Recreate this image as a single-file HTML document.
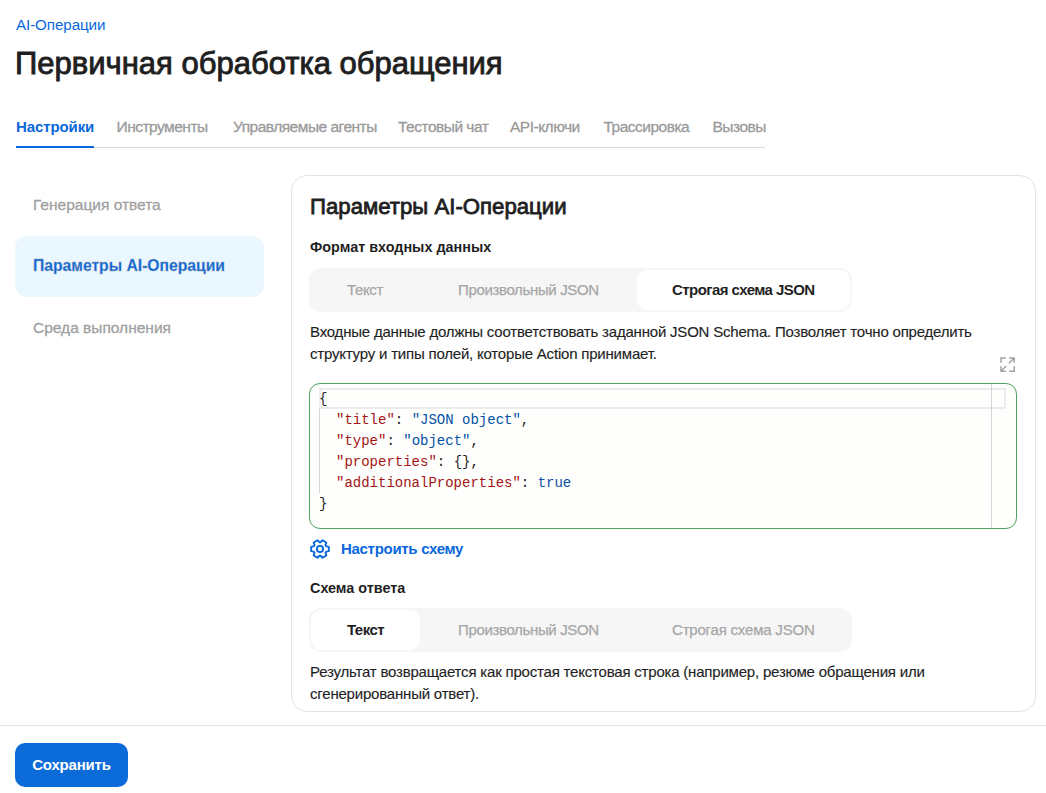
<!DOCTYPE html>
<html><head><meta charset="utf-8">
<style>
*{box-sizing:border-box;margin:0;padding:0}
html,body{width:1046px;height:793px;overflow:hidden;background:#fff}
body{font-family:"Liberation Sans",sans-serif;color:#1f1f1f;position:relative}
.abs{position:absolute;white-space:nowrap}
.crumb{left:16px;top:16px;font-size:15.2px;line-height:18px;color:#0a68dc;letter-spacing:-0.1px}
.title{left:15px;top:46px;font-size:31px;line-height:36px;color:#1f1f1f;-webkit-text-stroke:0.9px #1f1f1f}
.tab{top:117px;font-size:15.5px;line-height:20px;color:#9a9a9a;letter-spacing:-0.5px;-webkit-text-stroke:0.3px #9a9a9a}
.tab.act{color:#0a68dc;font-weight:700;font-size:15px;letter-spacing:-0.1px;-webkit-text-stroke:0}
.tabline{left:16px;top:147px;width:749px;height:1px;background:#d9d9d9}
.tabul{left:16px;top:146px;width:78px;height:2px;background:#0a68dc}
.side{left:33px;font-size:15.5px;line-height:20px;color:#a0a0a0;-webkit-text-stroke:0.3px #a0a0a0}
.sideact{left:15px;top:236px;width:249px;height:61px;border-radius:12px;background:#ebf7fe}
.card{left:291px;top:175px;width:745px;height:537px;border:1px solid #e3e3e3;border-radius:16px}
.h2{left:310px;top:193px;font-size:22.2px;line-height:28px;color:#1f1f1f;-webkit-text-stroke:0.8px #1f1f1f}
.lbl{left:310px;font-size:14.4px;line-height:18px;font-weight:700;color:#1f1f1f}
.seg{left:309px;width:543px;height:44px;border-radius:12px;background:#f6f6f6}
.segb{position:absolute;top:2px;height:40px;border-radius:10px;background:#fff}
.segt{position:absolute;top:12px;font-size:15px;line-height:20px;color:#a6a6a6;white-space:nowrap;letter-spacing:-0.35px;-webkit-text-stroke:0.25px #a6a6a6}
.segt.act{color:#1f1f1f;font-weight:700;letter-spacing:-0.55px;-webkit-text-stroke:0}
.desc{left:310px;font-size:15px;line-height:22px;color:#1f1f1f;letter-spacing:-0.2px;-webkit-text-stroke:0.15px #1f1f1f}
.editor{left:309px;top:383px;width:708px;height:146px;border:1px solid #4da35f;border-radius:11px;background:#fefefc;overflow:hidden}
.code{font-family:"Liberation Mono",monospace;font-size:14px;line-height:21px;color:#1f1f1f}
.k{color:#a31515}.s{color:#0451a5}.b{color:#0b4fa8}
.btn{left:15px;top:743px;width:113px;height:44px;border-radius:10px;background:#0b6cd9;color:#fff;font-size:15px;font-weight:700;line-height:44px;text-align:center;letter-spacing:-0.2px}
</style></head><body>
<div class="abs crumb">AI-Операции</div>
<div class="abs title">Первичная обработка обращения</div>

<div class="abs tab act" style="left:16px">Настройки</div>
<div class="abs tab" style="left:116.5px">Инструменты</div>
<div class="abs tab" style="left:233px">Управляемые агенты</div>
<div class="abs tab" style="left:398px">Тестовый чат</div>
<div class="abs tab" style="left:510px">API-ключи</div>
<div class="abs tab" style="left:603.5px">Трассировка</div>
<div class="abs tab" style="left:712.5px">Вызовы</div>
<div class="abs tabline"></div>
<div class="abs tabul"></div>

<div class="abs side" style="top:195px">Генерация ответа</div>
<div class="abs sideact"></div>
<div class="abs side" style="top:256px;color:#0a68dc;font-weight:700;font-size:15.7px">Параметры AI-Операции</div>
<div class="abs side" style="top:318px">Среда выполнения</div>

<div class="abs card"></div>
<div class="abs h2">Параметры AI-Операции</div>
<div class="abs lbl" style="top:238px">Формат входных данных</div>
<div class="abs seg" style="top:268px">
  <div class="segb" style="left:328px;width:213px"></div>
  <div class="segt" style="left:38px">Текст</div>
  <div class="segt" style="left:149px">Произвольный JSON</div>
  <div class="segt act" style="left:363px">Строгая схема JSON</div>
</div>
<div class="abs desc" style="top:321px">Входные данные должны соответствовать заданной JSON Schema. Позволяет точно определить</div>
<div class="abs desc" style="top:343px">структуру и типы полей, которые Action принимает.</div>

<div class="abs editor"></div>
<div class="abs" style="left:319px;top:388px;width:687px;height:21px;border:2px solid #ececec"></div>
<div class="abs" style="left:319px;top:409px;width:1px;height:84px;background:#d4d4d4"></div>
<div class="abs" style="left:991px;top:384px;width:1px;height:144px;background:#d6d6d6"></div>
<svg class="abs" style="left:1000px;top:357px" width="16" height="16" viewBox="0 0 16 16" fill="none" stroke="#a0a0a0" stroke-width="1.45"><path d="M1 5.8V1H5.8M9.2 1H14.2V5.8M14 1.2L8.9 6.3M1 9.2V14.2H5.8M1.2 14L6.2 9M9.2 14.2H14.2V9.2"/></svg>
<div class="abs code" style="left:319px;top:389px">{</div>
<div class="abs code" style="left:336px;top:410px"><span class="k">"title"</span>: <span class="s">"JSON object"</span>,</div>
<div class="abs code" style="left:336px;top:431px"><span class="k">"type"</span>: <span class="s">"object"</span>,</div>
<div class="abs code" style="left:336px;top:452px"><span class="k">"properties"</span>: {},</div>
<div class="abs code" style="left:336px;top:473px"><span class="k">"additionalProperties"</span>: <span class="b">true</span></div>
<div class="abs code" style="left:319px;top:494px">}</div>

<svg class="abs" style="left:310px;top:539px" width="20" height="20" viewBox="0 0 20 20" fill="none" stroke="#0a68dc" stroke-width="1.9" stroke-linejoin="round"><path d="M15.93 7.11 L18.83 7.80 L18.83 12.20 L15.93 12.89 L15.47 13.69 L16.32 16.55 L12.51 18.75 L10.46 16.58 L9.54 16.58 L7.49 18.75 L3.68 16.55 L4.53 13.69 L4.07 12.89 L1.17 12.20 L1.17 7.80 L4.07 7.11 L4.53 6.31 L3.68 3.45 L7.49 1.25 L9.54 3.42 L10.46 3.42 L12.51 1.25 L16.32 3.45 L15.47 6.31Z"/><circle cx="10" cy="10" r="3.1"/></svg>
<div class="abs" style="left:341px;top:539px;font-size:15px;line-height:20px;font-weight:700;color:#0a68dc;letter-spacing:-0.3px">Настроить схему</div>

<div class="abs lbl" style="top:579px">Схема ответа</div>
<div class="abs seg" style="top:608px">
  <div class="segb" style="left:2px;width:109px"></div>
  <div class="segt act" style="left:38px">Текст</div>
  <div class="segt" style="left:149px">Произвольный JSON</div>
  <div class="segt" style="left:363px;letter-spacing:-0.2px">Строгая схема JSON</div>
</div>
<div class="abs desc" style="top:661px">Результат возвращается как простая текстовая строка (например, резюме обращения или</div>
<div class="abs desc" style="top:683px">сгенерированный ответ).</div>

<div class="abs" style="left:0;top:725px;width:1046px;height:1px;background:#e3e3e3"></div>
<div class="abs btn">Сохранить</div>
</body></html>
